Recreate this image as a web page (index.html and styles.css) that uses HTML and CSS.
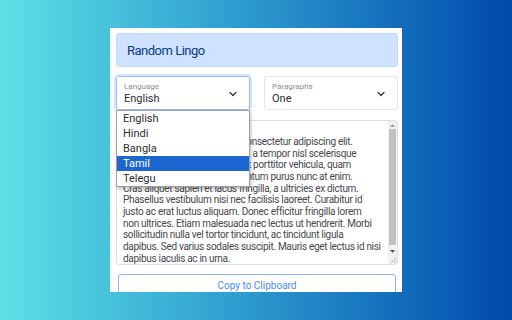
FILE: index.html
```html
<!DOCTYPE html>
<html lang="en">
<head>
    <meta charset="UTF-8">
    <meta name="viewport" content="width=device-width, initial-scale=1.0">
    <title>Random Lingo</title>
    <link rel="stylesheet" href="styles.css">
</head>
<body>
    <div class="popup">
        <div class="header">Random Lingo</div>

        <div class="selects">
            <div class="field focused">
                <div class="field-text">
                    <span class="field-label">Language</span>
                    <span class="field-value">English</span>
                </div>
                <svg class="chevron" width="8" height="6" viewBox="0 0 8 6"><path d="M1 1.5 L4 4.5 L7 1.5" fill="none" stroke="#343a40" stroke-width="1.3" stroke-linecap="round" stroke-linejoin="round"/></svg>

                <ul class="options">
                    <li>English</li>
                    <li>Hindi</li>
                    <li>Bangla</li>
                    <li class="active">Tamil</li>
                    <li>Telegu</li>
                </ul>
            </div>

            <div class="field">
                <div class="field-text">
                    <span class="field-label">Paragraphs</span>
                    <span class="field-value">One</span>
                </div>
                <svg class="chevron" width="8" height="6" viewBox="0 0 8 6"><path d="M1 1.5 L4 4.5 L7 1.5" fill="none" stroke="#343a40" stroke-width="1.3" stroke-linecap="round" stroke-linejoin="round"/></svg>
            </div>
        </div>

        <div class="output-box">
            <textarea class="output" wrap="off" readonly>Lorem ipsum dolor sit amet, consectetur adipiscing elit.
Nunc consequat nisl sed ut mi, a tempor nisl scelerisque
Integer at vel sapien ut lacus et porttitor vehicula, quam
Aliquam sed nunc elit a fermentum purus nunc at enim.
Cras aliquet sapien et lacus fringilla, a ultricies ex dictum.
Phasellus vestibulum nisi nec facilisis laoreet. Curabitur id
justo ac erat luctus aliquam. Donec efficitur fringilla lorem
non ultrices. Etiam malesuada nec lectus ut hendrerit. Morbi
sollicitudin nulla vel tortor tincidunt, ac tincidunt ligula
dapibus. Sed varius sodales suscipit. Mauris eget lectus id nisi
dapibus iaculis ac in urna.</textarea>

            <div class="scrollbar">
                <div class="scroll-btn">
                    <svg width="5" height="3" viewBox="0 0 5 3"><path d="M0 3 L2.5 0 L5 3 Z" fill="#a3a3a3"/></svg>
                </div>
                <div class="scroll-thumb"></div>
                <div class="scroll-btn">
                    <svg width="5" height="3" viewBox="0 0 5 3"><path d="M0 0 L2.5 3 L5 0 Z" fill="#505050"/></svg>
                </div>
                <div class="scroll-corner">
                    <svg width="8" height="8" viewBox="0 0 8 8"><path d="M7 2 L2 7 M7 5 L5 7" stroke="#9a9a9a" stroke-width="0.8"/></svg>
                </div>
            </div>
        </div>

        <button class="copy-btn">Copy to Clipboard</button>
    </div>
</body>
</html>
```

FILE: styles.css
```css
html, body {
    margin: 0;
    height: 100%;
}

body {
    background: linear-gradient(90deg, #5ce1e6 0%, #2f9fd0 45%, #004aad 100%);
    font-family: Roboto, "Noto Sans", sans-serif;
    display: flex;
    justify-content: center;
    align-items: center;
}

.popup {
    width: 292px;
    height: 264px;
    box-sizing: border-box;
    padding: 5px 4px 0 6px;
    background: #fff;
    overflow: hidden;
    display: flex;
    flex-direction: column;
}

.popup > * {
    flex-shrink: 0;
}

.header {
    height: 34px;
    box-sizing: border-box;
    padding: 1px 0 0 10px;
    display: flex;
    align-items: center;
    background: #cfe2ff;
    border: 1px solid #bfd8fd;
    border-radius: 3px;
    color: #0b3b8c;
    font-size: 13px;
    letter-spacing: -0.5px;
}

.selects {
    display: flex;
    gap: 14px;
    margin-top: 9px;
    position: relative;
    z-index: 2;
}

.field {
    flex: 1;
    height: 34px;
    box-sizing: border-box;
    border: 1px solid #e3e6ea;
    border-radius: 3px;
    padding: 1px 12px 0 7px;
    display: flex;
    align-items: center;
    position: relative;
}

.field.focused {
    border-color: #93bdf9;
    box-shadow: 0 0 0 2px rgba(13, 110, 253, 0.18);
}

.field-text {
    flex: 1;
    display: flex;
    flex-direction: column;
}

.field-label {
    font-size: 8px;
    color: #8a8f94;
    line-height: 10px;
}

.field-value {
    font-size: 11px;
    color: #2b2f33;
    line-height: 13px;
}

.options {
    position: absolute;
    top: 33px;
    left: -1px;
    right: -1px;
    margin: 0;
    padding: 0;
    list-style: none;
    background: #fff;
    border: 1px solid #a0a0a0;
    box-shadow: 1px 2px 3px rgba(0, 0, 0, 0.25);
}

.options li {
    height: 15px;
    line-height: 15px;
    padding-left: 6px;
    font-size: 11px;
    color: #2b2f33;
}

.options li.active {
    background: #1c66d2;
    color: #fff;
}

.output-box {
    margin-top: 10px;
    height: 145px;
    box-sizing: border-box;
    border: 1px solid #dee2e6;
    border-radius: 3px;
    display: flex;
    overflow: hidden;
}

.output {
    flex: 1;
    min-width: 0;
    box-sizing: border-box;
    padding: 15px 4px 0 6px;
    border: none;
    font-family: inherit;
    font-size: 10px;
    letter-spacing: -0.3px;
    line-height: 11.67px;
    color: #45494d;
    resize: none;
    overflow: hidden;
    outline: none;
}

.scrollbar {
    width: 9px;
    background: #f1f1f1;
    display: flex;
    flex-direction: column;
}

.scroll-btn {
    height: 8px;
    display: flex;
    justify-content: center;
    align-items: center;
}

.scroll-thumb {
    flex: 1;
    margin: 0 1px 2px;
    background: #c1c1c1;
}

.scroll-corner {
    height: 9px;
    display: flex;
    justify-content: flex-end;
    align-items: flex-end;
}

.copy-btn {
    margin: 9px 2px 0;
    height: 30px;
    background: #fff;
    border: 1px solid #8ab8fb;
    border-radius: 3px;
    color: #4a8ef5;
    font-family: inherit;
    font-size: 10px;
    padding: 0 0 8px;
}
```
